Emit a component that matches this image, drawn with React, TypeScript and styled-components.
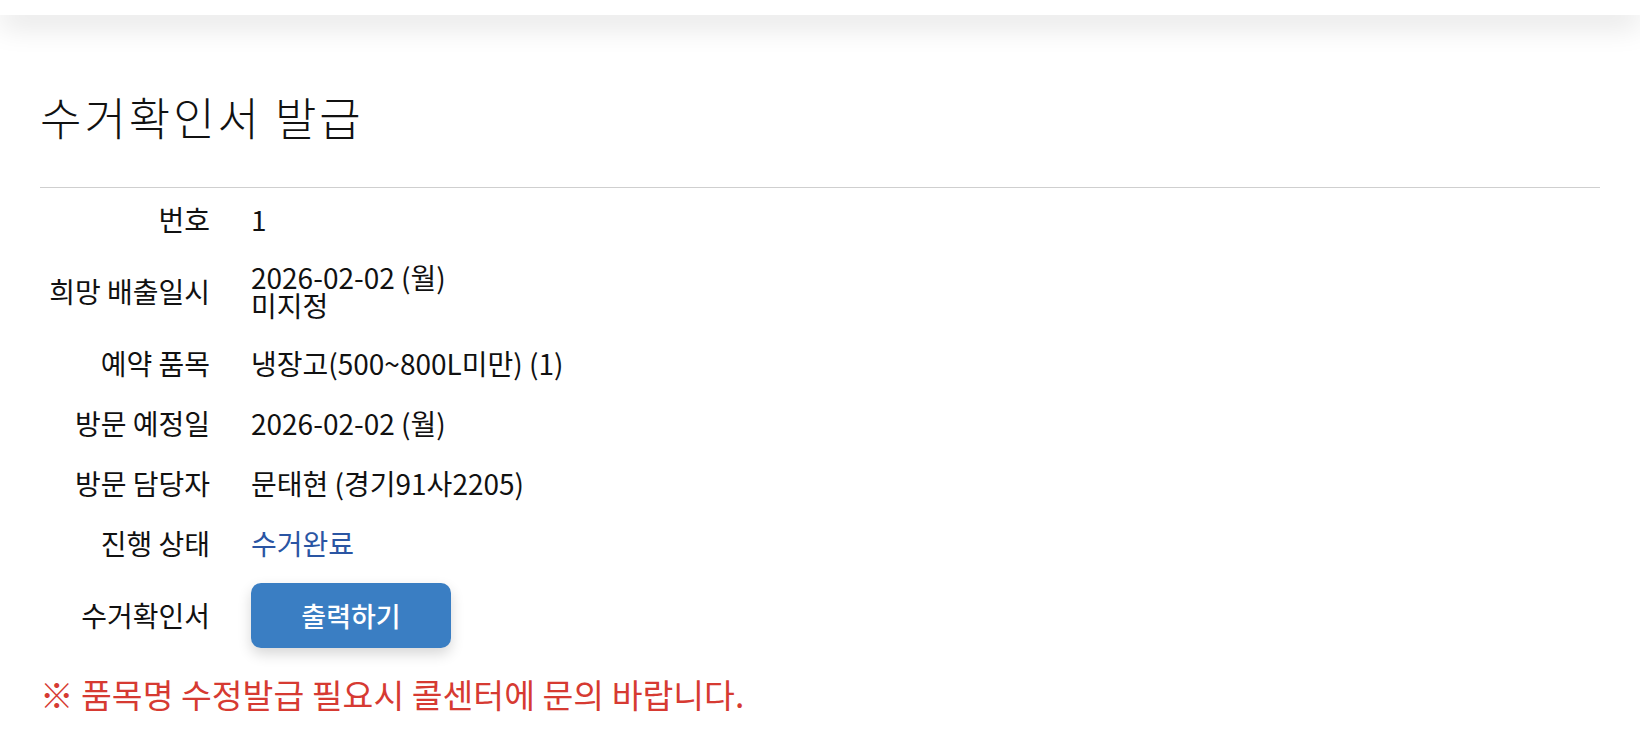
import React from 'react';
import styled, { createGlobalStyle } from 'styled-components';

const GlobalStyle = createGlobalStyle`
    html, body {
        margin: 0;
        padding: 0;
        background: #ffffff;
    }
    body {
        font-family: 'Noto Sans CJK KR', 'Noto Sans', sans-serif;
        color: #111111;
    }
`;

const Page = styled.div`
    min-height: 754px;
    background: #ffffff;
`;

const TopBar = styled.header`
    position: relative;
    z-index: 1;
    height: 15px;
    background: #ffffff;
    box-shadow: 0 8px 30px rgba(0, 0, 0, 0.17);
`;

const Main = styled.main`
    padding: 0 40px;
`;

const Title = styled.h1`
    margin: 0;
    padding-top: 76px;
    padding-bottom: 44px;
    font-size: 45px;
    line-height: 52px;
    font-weight: 300;
    letter-spacing: 3px;
    color: #111111;
    border-bottom: 1px solid #cfcfcf;
`;

const InfoList = styled.dl`
    margin: 1px 0 0;
    display: grid;
    grid-template-columns: 170px 1fr;
    column-gap: 41px;
`;

const Label = styled.dt<{ $tall?: boolean }>`
    height: ${(p) => (p.$tall ? 84 : 60)}px;
    display: flex;
    align-items: center;
    justify-content: flex-end;
    font-size: 28px;
    line-height: 28px;
    white-space: nowrap;
`;

const Value = styled.dd<{ $tall?: boolean; $accent?: boolean }>`
    margin: 0;
    height: ${(p) => (p.$tall ? 84 : 60)}px;
    display: flex;
    flex-direction: column;
    justify-content: center;
    font-size: 28px;
    line-height: 28px;
    white-space: nowrap;
    color: ${(p) => (p.$accent ? '#2a55a3' : '#111111')};
`;

const PrintButton = styled.button`
    width: 200px;
    height: 65px;
    border: none;
    border-radius: 10px;
    background: #3a7ec3;
    color: #ffffff;
    font-family: 'Noto Sans CJK KR', sans-serif;
    font-size: 27px;
    font-weight: 500;
    box-shadow: 0 6px 14px rgba(0, 0, 0, 0.16);
    cursor: pointer;
`;

const Notice = styled.p`
    margin: 18px 0 0;
    font-size: 33.5px;
    line-height: 38px;
    font-weight: 400;
    color: #d63a32;
`;

interface Row {
    label: string;
    lines: string[];
    tall?: boolean;
    accent?: boolean;
}

const rows: Row[] = [
    { label: '번호', lines: ['1'] },
    { label: '희망 배출일시', lines: ['2026-02-02 (월)', '미지정'], tall: true },
    { label: '예약 품목', lines: ['냉장고(500~800L미만) (1)'] },
    { label: '방문 예정일', lines: ['2026-02-02 (월)'] },
    { label: '방문 담당자', lines: ['문태현 (경기91사2205)'] },
    { label: '진행 상태', lines: ['수거완료'], accent: true },
];

export default function App() {
    return (
        <Page>
            <GlobalStyle />
            <TopBar />
            <Main>
                <Title>수거확인서 발급</Title>
                <InfoList>
                    {rows.map((row) => (
                        <React.Fragment key={row.label}>
                            <Label $tall={row.tall}>{row.label}</Label>
                            <Value $tall={row.tall} $accent={row.accent}>
                                {row.lines.map((line) => (
                                    <span key={line}>{line}</span>
                                ))}
                            </Value>
                        </React.Fragment>
                    ))}
                    <Label $tall>수거확인서</Label>
                    <Value $tall>
                        <div>
                            <PrintButton type="button">출력하기</PrintButton>
                        </div>
                    </Value>
                </InfoList>
                <Notice>※ 품목명 수정발급 필요시 콜센터에 문의 바랍니다.</Notice>
            </Main>
        </Page>
    );
}
